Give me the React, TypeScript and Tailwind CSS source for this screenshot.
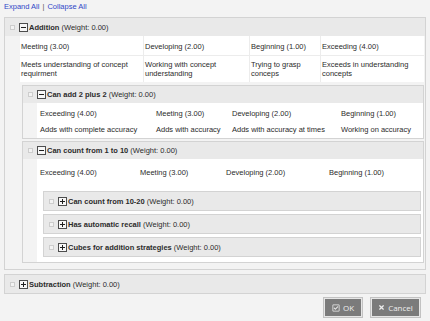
import { FaRegCheckSquare, FaTimes } from "react-icons/fa";

function Check() {
  return <span className="block h-[5px] w-[5px] shrink-0 border border-[#cdcdcd] bg-[#f3f3f3]" />;
}

function Toggle({ open }: { open: boolean }) {
  return (
    <svg width="9" height="9" viewBox="0 0 9 9" className="block shrink-0">
      <rect x="0.5" y="0.5" width="8" height="8" fill="#f7f7f7" stroke="#4d4d4d" />
      <path d="M2 4.5h5" stroke="#1f1f1f" />
      {!open && <path d="M4.5 2v5" stroke="#1f1f1f" />}
    </svg>
  );
}

function Header({ title, open, tall }: { title: string; open: boolean; tall?: boolean }) {
  return (
    <div
      className={`flex items-center bg-[#e9e9e9] pl-[5px] ${tall ? "h-[18px]" : "h-[17px]"}`}
    >
      <Check />
      <span className="ml-[4px]">
        <Toggle open={open} />
      </span>
      <span className="ml-[1px] whitespace-pre">
        <b className="font-bold">{title}</b> (Weight: 0.00)
      </span>
    </div>
  );
}

function SubPanel({ title }: { title: string }) {
  return (
    <div className="border border-[#d3d3d3]">
      <Header title={title} open={false} tall />
    </div>
  );
}

export default function App() {
  return (
    <div
      className="h-[321px] w-[430px] overflow-hidden bg-[#f3f3f3] text-[7.5px] leading-[9px] text-[#2b2b2b]"
      style={{ fontFamily: '"Liberation Sans", Arial, sans-serif' }}
    >
      {/* Links */}
      <div className="flex h-[17px] items-start pl-[4px] pt-[2px] text-[#3048c8]">
        <span>Expand All</span>
        <span className="mx-[3px] text-[#555]">|</span>
        <span>Collapse All</span>
      </div>

      {/* Addition */}
      <div className="ml-[4px] w-[422px] border border-[#d3d3d3]">
        <Header title="Addition" open tall />
        <div className="pb-[6px]">
          <div className="ml-[15px] mr-[1px] grid grid-cols-[123px_105px_70px_1fr] gap-[1px] bg-[#ececec]">
            <div className="h-[19px] bg-white pl-[1px] pt-[6px]">Meeting (3.00)</div>
            <div className="h-[19px] bg-white pl-[1px] pt-[6px]">Developing (2.00)</div>
            <div className="h-[19px] bg-white pl-[1px] pt-[6px]">Beginning (1.00)</div>
            <div className="h-[19px] bg-white pl-[1px] pt-[6px]">Exceeding (4.00)</div>
            <div className="h-[26px] bg-white pl-[1px] pt-[4px]">Meets understanding of concept requirment</div>
            <div className="h-[26px] bg-white pl-[1px] pt-[4px]">Working with concept understanding</div>
            <div className="h-[26px] bg-white pl-[1px] pt-[4px]">Trying to grasp conceps</div>
            <div className="h-[26px] bg-white pl-[1px] pt-[4px]">Exceeds in understanding concepts</div>
          </div>

          {/* Can add 2 plus 2 */}
          <div className="ml-[17px] mr-[1px] mt-[3px] border border-[#d3d3d3]">
            <Header title="Can add 2 plus 2" open />
            <div className="pl-[14px]">
              <div className="grid grid-cols-[116px_76px_109px_1fr] bg-white">
                <div className="h-[18px] pl-[3px] pt-[6px]">Exceeding (4.00)</div>
                <div className="h-[18px] pl-[3px] pt-[6px]">Meeting (3.00)</div>
                <div className="h-[18px] pl-[3px] pt-[6px]">Developing (2.00)</div>
                <div className="h-[18px] pl-[3px] pt-[6px]">Beginning (1.00)</div>
                <div className="h-[17px] pl-[3px] pt-[4px]">Adds with complete accuracy</div>
                <div className="h-[17px] pl-[3px] pt-[4px]">Adds with accuracy</div>
                <div className="h-[17px] pl-[3px] pt-[4px]">Adds with accuracy at times</div>
                <div className="h-[17px] pl-[3px] pt-[4px]">Working on accuracy</div>
              </div>
            </div>
          </div>

          {/* Can count from 1 to 10 */}
          <div className="ml-[17px] mr-[1px] mt-[2px] border border-[#d3d3d3]">
            <Header title="Can count from 1 to 10" open />
            <div className="pl-[14px]">
              <div className="bg-white pb-[5px]">
                <div className="grid grid-cols-[100px_86px_103px_1fr]">
                  <div className="h-[27px] pl-[3px] pt-[9px]">Exceeding (4.00)</div>
                  <div className="h-[27px] pl-[3px] pt-[9px]">Meeting (3.00)</div>
                  <div className="h-[27px] pl-[3px] pt-[9px]">Developing (2.00)</div>
                  <div className="h-[27px] pl-[3px] pt-[9px]">Beginning (1.00)</div>
                </div>
                <div className="ml-[6px] mr-[2px] mt-[5px] flex flex-col gap-[3px]">
                  <SubPanel title="Can count from 10-20" />
                  <SubPanel title="Has automatic recall" />
                  <SubPanel title="Cubes for addition strategies" />
                </div>
              </div>
            </div>
          </div>
        </div>
      </div>

      {/* Subtraction */}
      <div className="ml-[4px] mt-[4px] w-[422px] border border-[#d3d3d3]">
        <Header title="Subtraction" open={false} tall />
      </div>

      {/* Buttons */}
      <div
        className="mt-[4px] flex justify-end gap-[9px] pr-[10px] text-[8px] text-[#eeeeee]"
        style={{ fontFamily: '"Open Sans", "DejaVu Sans", sans-serif' }}
      >
        <button className="flex h-[19px] w-[38px] items-center justify-center gap-[3px] border border-[#e6e6e6] bg-[#7b7b7b] shadow-[0_0_0_1px_#c2c2c2]">
          <FaRegCheckSquare className="h-[8px] w-[8px]" />
          <span>OK</span>
        </button>
        <button className="flex h-[19px] w-[49px] items-center justify-center gap-[3px] border border-[#e6e6e6] bg-[#7b7b7b] shadow-[0_0_0_1px_#c2c2c2]">
          <FaTimes className="h-[7px] w-[7px]" />
          <span>Cancel</span>
        </button>
      </div>
    </div>
  );
}
